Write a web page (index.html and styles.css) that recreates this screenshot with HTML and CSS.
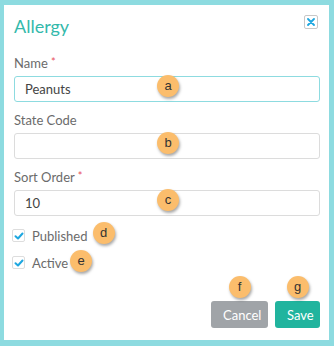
FILE: index.html
```html
<!DOCTYPE html>
<html>
<head>
	<title>Allergy</title>
	<link rel="stylesheet" href="styles.css">
</head>
<body>
<div class="modal">
	<div class="m-head">
		<h2 class="m-title">Allergy</h2>
		<span class="m-close">
			<svg width="8" height="8" viewBox="0 0 8 8"><path d="M1 1L7 7M7 1L1 7" stroke="#1ea7e0" stroke-width="1.8" stroke-linecap="round"/></svg>
		</span>
	</div>
	<div class="m-body">
		<div class="field">
			<label class="f-label">Name <em>*</em></label>
			<div class="f-box f-focus">Peanuts<span class="tag tag-input">a</span></div>
		</div>
		<div class="field">
			<label class="f-label">State Code</label>
			<div class="f-box"><span class="tag tag-input">b</span></div>
		</div>
		<div class="field field-last">
			<label class="f-label">Sort Order <em>*</em></label>
			<div class="f-box">10<span class="tag tag-input">c</span></div>
		</div>
		<div class="check">
			<span class="c-box"><svg width="10" height="8" viewBox="0 0 10 8"><path d="M1.5 4.2L4 6.5L8.5 1.5" fill="none" stroke="#1ea7e0" stroke-width="2" stroke-linecap="round" stroke-linejoin="round"/></svg></span>
			<span class="c-text">Published<span class="tag tag-d">d</span></span>
		</div>
		<div class="check">
			<span class="c-box"><svg width="10" height="8" viewBox="0 0 10 8"><path d="M1.5 4.2L4 6.5L8.5 1.5" fill="none" stroke="#1ea7e0" stroke-width="2" stroke-linecap="round" stroke-linejoin="round"/></svg></span>
			<span class="c-text">Active<span class="tag tag-e">e</span></span>
		</div>
	</div>
	<div class="m-foot">
		<button class="btn btn-cancel">Cancel<span class="tag tag-btn">f</span></button>
		<button class="btn btn-save">Save<span class="tag tag-btn">g</span></button>
	</div>
</div>
</body>
</html>
```

FILE: styles.css
```css
html, body{
	margin: 0;
	padding: 0;
	background: #8ddbe0;
}
body{
	width: 334px;
	height: 346px;
	padding: 5px 5px 6px 4px;
	box-sizing: border-box;
	font-family: Lato, "Open Sans", sans-serif;
}
.modal{
	height: 100%;
	background: #fff;
	box-sizing: border-box;
	padding: 0 9px 0 10px;
	display: flex;
	flex-direction: column;
}
.m-head{
	display: flex;
	justify-content: space-between;
	align-items: flex-start;
	height: 50px;
}
.m-title{
	margin: 10px 0 0 0;
	font-size: 18px;
	font-weight: 400;
	color: #33b9ab;
}
.m-close{
	margin-top: 10px;
	margin-right: 2px;
	width: 12px;
	height: 12px;
	border: 1px solid #c8c8c8;
	border-radius: 2px;
	display: flex;
	align-items: center;
	justify-content: center;
}
.field{
	margin-bottom: 10px;
}
.field-last{
	margin-bottom: 6px;
}
.f-label{
	display: block;
	font-size: 13px;
	color: #6b6b6b;
	height: 18px;
	margin-bottom: 3px;
}
.f-label em{
	font-style: normal;
	color: #e8505b;
	font-size: 11px;
	vertical-align: top;
}
.f-box{
	position: relative;
	height: 26px;
	border: 1px solid #dcdcdc;
	border-radius: 3px;
	box-sizing: border-box;
	padding-left: 10px;
	line-height: 24px;
	font-size: 13px;
	color: #444;
}
.f-focus{
	border-color: #8ddbe0;
}
.check{
	display: flex;
	align-items: center;
	height: 27px;
	margin-left: -2px;
}
.c-box{
	width: 11px;
	height: 11px;
	border: 1px solid #ddd;
	border-radius: 2px;
	display: flex;
	align-items: center;
	justify-content: center;
	margin-right: 7px;
}
.c-text{
	position: relative;
	font-size: 13px;
	color: #6b6b6b;
}
.m-foot{
	margin-top: auto;
	margin-bottom: 12px;
	display: flex;
	justify-content: flex-end;
	gap: 7px;
}
.btn{
	position: relative;
	height: 27px;
	border: 0;
	border-radius: 3px;
	color: #fff;
	font-family: Lato, sans-serif;
	font-size: 13px;
	padding: 0 12px;
}
.btn-cancel{
	background: #a0a4a8;
	width: 57px;
}
.btn-save{
	background: #21b49e;
	width: 45px;
}
.tag{
	position: absolute;
	width: 22px;
	height: 22px;
	border-radius: 50%;
	background: #fbbd6c;
	box-shadow: 1px 2px 3px rgba(0,0,0,0.35);
	color: #333;
	font-family: "Liberation Sans", Arial, sans-serif;
	font-size: 13px;
	line-height: 22px;
	text-align: center;
}
.tag-input{
	left: 142px;
	top: -2px;
}
.tag-d{
	left: calc(100% + 5px);
	top: -6px;
}
.tag-e{
	left: calc(100% + 2px);
	top: -5px;
}
.tag-btn{
	left: 50%;
	margin-left: -11px;
	top: -25px;
}
```
